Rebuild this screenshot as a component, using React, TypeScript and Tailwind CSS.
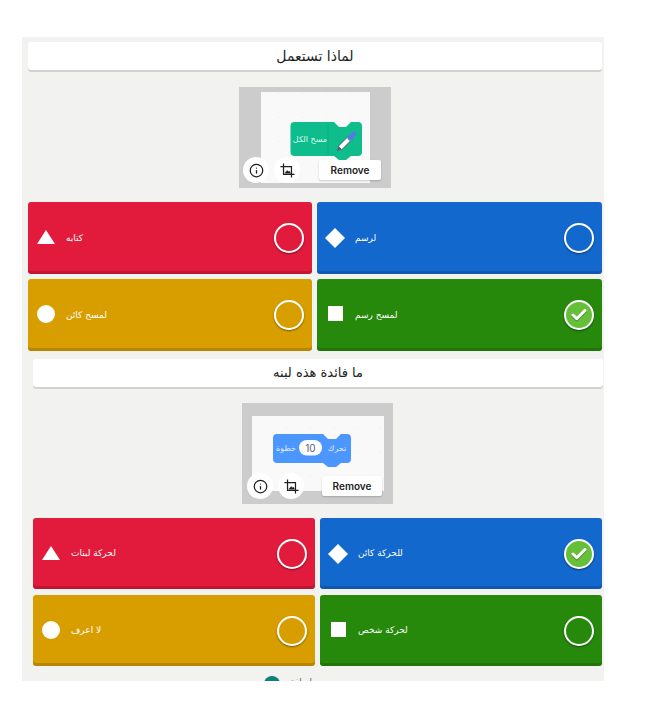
import React from 'react';
import { Info, Check } from 'lucide-react';

type Shape = 'triangle' | 'diamond' | 'circle' | 'square';

interface AnswerProps {
  label: string;
  color: string;
  shape: Shape;
  height: string;
  checked?: boolean;
}

const ARABIC = "font-['DejaVu_Sans','Noto_Sans',sans-serif]";

const ShapeIcon: React.FC<{ shape: Shape }> = ({ shape }) => {
  return (
    <svg width="20" height="20" viewBox="0 0 20 20" className="shrink-0">
      {shape === 'triangle' && <polygon points="10,2 19,16 1,16" fill="#fff" />}
      {shape === 'diamond' && <polygon points="10,0 20,10 10,20 0,10" fill="#fff" />}
      {shape === 'circle' && <circle cx="10" cy="9" r="9" fill="#fff" />}
      {shape === 'square' && <rect x="3" y="1" width="15" height="15" fill="#fff" />}
    </svg>
  );
};

const Answer: React.FC<AnswerProps> = ({ label, color, shape, height, checked }) => {
  return (
    <div className={`flex items-center rounded-[3px] pl-[8px] pr-[8px] shadow-[inset_0_-3px_0_rgba(0,0,0,0.15)] ${color} ${height}`}>
      <ShapeIcon shape={shape} />
      <span className={`ml-[10px] text-[9px] leading-none text-white ${ARABIC}`}>{label}</span>
      <div
        className={`ml-auto flex h-[30px] w-[30px] items-center justify-center rounded-full border-2 border-white shadow-[0_1px_2px_rgba(0,0,0,0.45)] ${checked ? 'bg-[#66bf39]' : ''}`}
      >
        {checked && <Check size={18} strokeWidth={4} className="text-white drop-shadow-[0_1px_0_rgba(0,0,0,0.35)]" />}
      </div>
    </div>
  );
};

const CropIcon = () => (
  <svg width="15" height="15" viewBox="0 0 17 17" fill="none" stroke="#1f1f1f" strokeWidth="1.4">
    <path d="M4 0.5V13H16.5" />
    <path d="M0.5 4H13V16.5" />
    <path d="M5.5 11.5L8 8.5L9.5 10L10.5 9L12 11.5Z" fill="#1f1f1f" strokeWidth="0.5" />
  </svg>
);

const Overlays: React.FC<{ second?: boolean }> = ({ second }) => {
  return (
    <>
      <div className={`absolute bottom-[5px] ${second ? 'left-[5px]' : 'left-[4px]'} flex h-[26px] w-[26px] items-center justify-center rounded-full bg-white text-[#1f1f1f]`}>
        <Info size={15} strokeWidth={2} />
      </div>
      <div className={`absolute bottom-[5px] ${second ? 'left-[36px]' : 'left-[35px]'} flex h-[26px] w-[26px] items-center justify-center rounded-full bg-white`}>
        <CropIcon />
      </div>
      <div className={`absolute bottom-[8px] left-[80px] flex h-[20px] ${second ? 'w-[60px]' : 'w-[62px]'} items-center justify-center rounded-[2px] bg-white text-[10px] font-semibold text-[#222] shadow-[0_1px_2px_rgba(0,0,0,0.2)] font-['Inter',sans-serif]`}>
        Remove
      </div>
    </>
  );
};

const Dots: React.FC<{ cols: number[]; rows: number[] }> = ({ cols, rows }) => (
  <>
    {rows.map((y) => cols.map((x) => <circle key={`${x}-${y}`} cx={x} cy={y} r="0.5" fill="#e4e4e4" />))}
  </>
);

const EraseAllPreview = () => (
  <div className="relative flex h-[101px] w-[152px] items-center justify-center bg-[#cccccc]">
    <div className="h-[91px] w-[109px] bg-[#f9f9f9]">
      <svg width="109" height="91" viewBox="0 0 109 91">
        <Dots cols={[18, 42, 65, 89]} rows={[1, 25, 49, 72]} />
        <path
          d="M33.500 30H73L78 35H85L90 30H97Q101 30 101 34V60Q101 64 97 64H90L85 68H78L73 64H33.500Q29.500 64 29.500 60V34Q29.500 30 33.500 30Z"
          fill="#0fbd8c"
        />
        <line x1="67" y1="33" x2="67" y2="62" stroke="#0da57a" strokeWidth="0.7" />
        <text x="49" y="50" textAnchor="middle" fontSize="8" fill="#d6fff0" fontFamily="DejaVu Sans, sans-serif">
          مسح الكل
        </text>
        <line x1="79" y1="56" x2="90" y2="45" stroke="#575e75" strokeWidth="5.500" />
        <line x1="79" y1="56" x2="90" y2="45" stroke="#fff" strokeWidth="4" />
        <line x1="89" y1="46" x2="93" y2="42" stroke="#4c7fe0" strokeWidth="5" strokeLinecap="round" />
        <path d="M76 59L77.500 54L81 57.500Z" fill="#575e75" />
      </svg>
    </div>
    <Overlays />
  </div>
);

const MoveBlockPreview = () => (
  <div className="relative flex h-[101px] w-[151px] items-center justify-center bg-[#cccccc]">
    <div className="h-[75px] w-[132px] bg-[#f9f9f9]">
      <svg width="132" height="75" viewBox="0 0 132 75">
        <Dots cols={[12, 35, 59, 82, 105, 128]} rows={[12, 36, 60]} />
        <path
          d="M25 18H71L76 23H84L89 18H95Q99 18 99 22V43Q99 47 95 47H89L84 51H76L71 47H25Q21 47 21 43V22Q21 18 25 18Z"
          fill="#4c97ff"
        />
        <rect x="47" y="24" width="23" height="15.500" rx="7.750" fill="#fff" />
        <text x="58.500" y="35.500" textAnchor="middle" fontSize="10" fill="#575e75" fontFamily="Inter, sans-serif">
          10
        </text>
        <text x="34" y="35" textAnchor="middle" fontSize="8" fill="#e4efff" fontFamily="DejaVu Sans, sans-serif">
          خطوة
        </text>
        <text x="85" y="35" textAnchor="middle" fontSize="8" fill="#e4efff" fontFamily="DejaVu Sans, sans-serif">
          تحرك
        </text>
      </svg>
    </div>
    <Overlays second />
  </div>
);

const Title: React.FC<{ text: string; size: string }> = ({ text, size }) => (
  <div className={`flex h-[28px] items-center justify-center rounded-[3px] bg-white text-[#222] shadow-[0_2px_0_rgba(0,0,0,0.13)] ${size} ${ARABIC}`}>
    {text}
  </div>
);

export default function App() {
  return (
    <div className="h-[704px] w-[666px] bg-white pt-[37px]">
      <div className="ml-[22px] h-[644px] w-[582px] overflow-hidden bg-[#f2f2f1]">
        <section className="pl-[6px] pr-[2px] pt-[5px]">
          <Title text="لماذا تستعمل" size="text-[14px]" />
          <div className="mt-[17px] flex justify-center">
            <EraseAllPreview />
          </div>
          <div className="mt-[14px] grid grid-cols-[284px_285px] gap-[5px]">
            <Answer label="كتابه" color="bg-[#e21b3c]" shape="triangle" height="h-[72px]" />
            <Answer label="لرسم" color="bg-[#1368ce]" shape="diamond" height="h-[72px]" />
            <Answer label="لمسح كائن" color="bg-[#d89e00]" shape="circle" height="h-[72px]" />
            <Answer label="لمسح رسم" color="bg-[#26890c]" shape="square" height="h-[72px]" checked />
          </div>
        </section>

        <section className="mt-[8px] pl-[11px] pr-[1px]">
          <Title text="ما فائدة هذه لبنه" size="text-[13px]" />
          <div className="mt-[16px] flex justify-center pr-[1px]">
            <MoveBlockPreview />
          </div>
          <div className="mt-[14px] grid grid-cols-[282px_282px] gap-x-[5px] gap-y-[6px]">
            <Answer label="لحركة لبنات" color="bg-[#e21b3c]" shape="triangle" height="h-[71px]" />
            <Answer label="للحركة كائن" color="bg-[#1368ce]" shape="diamond" height="h-[71px]" checked />
            <Answer label="لا اعرف" color="bg-[#d89e00]" shape="circle" height="h-[71px]" />
            <Answer label="لحركة شخص" color="bg-[#26890c]" shape="square" height="h-[71px]" />
          </div>
          <div className="mt-[10px] ml-[231px] flex items-start gap-[10px]">
            <div className="h-[16px] w-[16px] rounded-full bg-[#0a8080]" />
            <span className={`text-[9px] leading-[12px] text-[#666] ${ARABIC}`}>إضافة</span>
          </div>
        </section>
      </div>
    </div>
  );
}
